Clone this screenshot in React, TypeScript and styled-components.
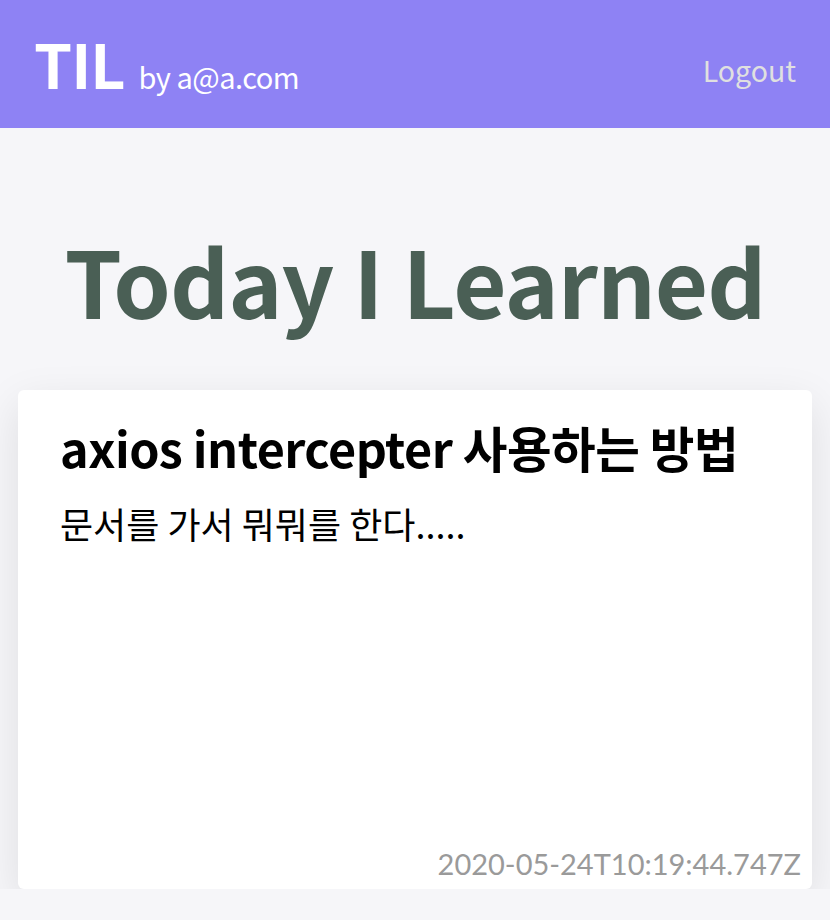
import styled, { createGlobalStyle } from "styled-components";

const GlobalStyle = createGlobalStyle`
  html, body {
    margin: 0;
    padding: 0;
    background-color: #f6f6f9;
    font-family: "Noto Sans CJK KR", "Noto Sans", sans-serif;
  }
`;

const Header = styled.header`
  display: flex;
  justify-content: space-between;
  align-items: center;
  height: 128px;
  padding: 0 34px 4px;
  box-sizing: border-box;
  background-color: #8e82f4;
`;

const Brand = styled.div`
  display: flex;
  align-items: baseline;
  gap: 14px;
  color: #fff;
`;

const Logo = styled.h1`
  margin: 0;
  font-size: 61px;
  font-weight: 700;
  letter-spacing: -1px;
`;

const Owner = styled.span`
  font-size: 29px;
  letter-spacing: -0.5px;
`;

const LogoutButton = styled.button`
  margin-top: 14px;
  border: none;
  background: none;
  padding: 0;
  color: #e0e0e0;
  font-family: inherit;
  font-size: 28.5px;
  cursor: pointer;
`;

const Main = styled.main`
  display: flex;
  flex-direction: column;
  align-items: center;
  padding: 0 18px;
`;

const Title = styled.h2`
  margin: 84px 0 45px;
  color: #4a5f55;
  font-size: 92px;
  font-weight: 700;
  letter-spacing: -1px;
`;

const PostCard = styled.article`
  display: flex;
  flex-direction: column;
  align-self: stretch;
  height: 499px;
  padding: 22px 11px 8px 42px;
  box-sizing: border-box;
  background-color: #fff;
  border-radius: 6px;
  box-shadow: 0 14px 44px rgba(0, 0, 0, 0.1);
`;

const PostTitle = styled.h3`
  margin: 0;
  font-size: 48.5px;
  font-weight: 700;
  letter-spacing: -0.5px;
`;

const PostBody = styled.p`
  flex: 1;
  margin: 15px 0 0;
  font-size: 36px;
`;

const PostDate = styled.time`
  align-self: flex-end;
  color: #9a9a9a;
  font-family: Lato, sans-serif;
  font-size: 29px;
`;

const post = {
  title: "axios intercepter 사용하는 방법",
  body: "문서를 가서 뭐뭐를 한다.....",
  createdAt: "2020-05-24T10:19:44.747Z",
};

const App = () => {
  return (
    <>
      <GlobalStyle />
      <Header>
        <Brand>
          <Logo>TIL</Logo>
          <Owner>by a@a.com</Owner>
        </Brand>
        <LogoutButton>Logout</LogoutButton>
      </Header>
      <Main>
        <Title>Today I Learned</Title>
        <PostCard>
          <PostTitle>{post.title}</PostTitle>
          <PostBody>{post.body}</PostBody>
          <PostDate>{post.createdAt}</PostDate>
        </PostCard>
      </Main>
    </>
  );
};

export default App;
